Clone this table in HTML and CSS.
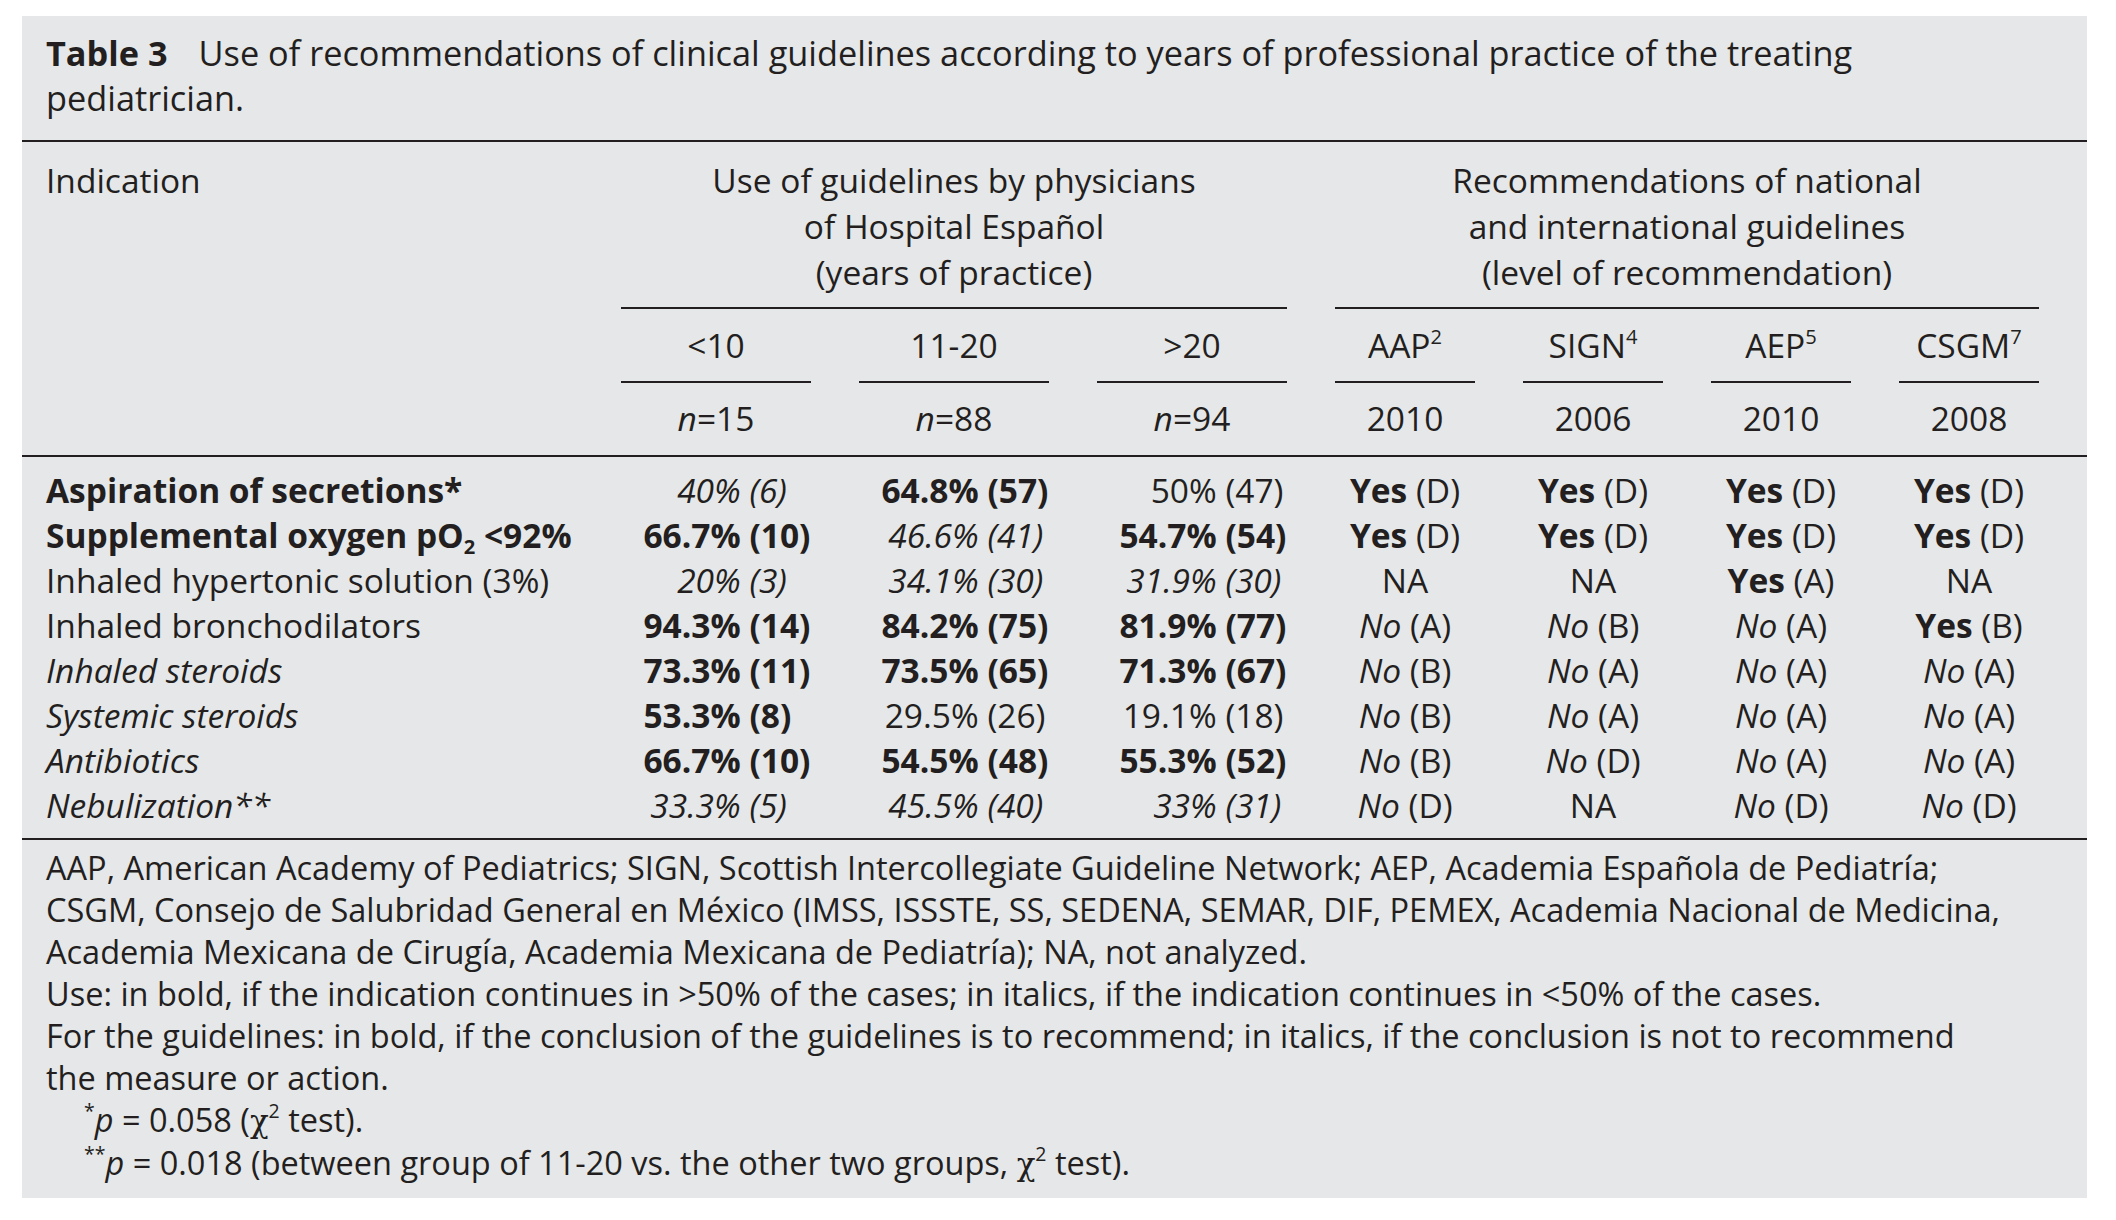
FILE: index.html
```html
<!DOCTYPE html>
<html lang="en">
<head>
<meta charset="utf-8">
<title>Table 3</title>
<link rel="stylesheet" href="styles.css">
</head>
<body>
<div class="table-box">
  <div class="caption">
    <div class="cap-line"><span class="cap-label">Table 3</span>Use of recommendations of clinical guidelines according to years of professional practice of the treating</div>
    <div class="cap-line">pediatrician.</div>
  </div>

  <div class="grid thead">
    <div class="ind-head">Indication</div>
    <div class="grp grp-use">Use of guidelines by physicians<br>of Hospital Español<br>(years of practice)</div>
    <div class="grp grp-rec">Recommendations of national<br>and international guidelines<br>(level of recommendation)</div>

    <div class="blank"></div>
    <div class="sub">&lt;10</div>
    <div class="sub">11-20</div>
    <div class="sub">&gt;20</div>
    <div class="sub">AAP<sup>2</sup></div>
    <div class="sub">SIGN<sup>4</sup></div>
    <div class="sub">AEP<sup>5</sup></div>
    <div class="sub">CSGM<sup>7</sup></div>

    <div class="blank"></div>
    <div class="nrow"><i>n</i>=15</div>
    <div class="nrow"><i>n</i>=88</div>
    <div class="nrow"><i>n</i>=94</div>
    <div class="nrow">2010</div>
    <div class="nrow">2006</div>
    <div class="nrow">2010</div>
    <div class="nrow">2008</div>
  </div>

  <div class="grid tbody">
    <div class="ind b">Aspiration of secretions*</div>
    <div class="v it"><span class="p">40%</span><span class="c">(6)</span></div>
    <div class="v b"><span class="p">64.8%</span><span class="c">(57)</span></div>
    <div class="v"><span class="p">50%</span><span class="c">(47)</span></div>
    <div class="g"><b>Yes</b> (D)</div>
    <div class="g"><b>Yes</b> (D)</div>
    <div class="g"><b>Yes</b> (D)</div>
    <div class="g"><b>Yes</b> (D)</div>

    <div class="ind b">Supplemental oxygen pO<sub>2</sub> &lt;92%</div>
    <div class="v b"><span class="p">66.7%</span><span class="c">(10)</span></div>
    <div class="v it"><span class="p">46.6%</span><span class="c">(41)</span></div>
    <div class="v b"><span class="p">54.7%</span><span class="c">(54)</span></div>
    <div class="g"><b>Yes</b> (D)</div>
    <div class="g"><b>Yes</b> (D)</div>
    <div class="g"><b>Yes</b> (D)</div>
    <div class="g"><b>Yes</b> (D)</div>

    <div class="ind">Inhaled hypertonic solution (3%)</div>
    <div class="v it"><span class="p">20%</span><span class="c">(3)</span></div>
    <div class="v it"><span class="p">34.1%</span><span class="c">(30)</span></div>
    <div class="v it"><span class="p">31.9%</span><span class="c">(30)</span></div>
    <div class="g">NA</div>
    <div class="g">NA</div>
    <div class="g"><b>Yes</b> (A)</div>
    <div class="g">NA</div>

    <div class="ind">Inhaled bronchodilators</div>
    <div class="v b"><span class="p">94.3%</span><span class="c">(14)</span></div>
    <div class="v b"><span class="p">84.2%</span><span class="c">(75)</span></div>
    <div class="v b"><span class="p">81.9%</span><span class="c">(77)</span></div>
    <div class="g"><i>No</i> (A)</div>
    <div class="g"><i>No</i> (B)</div>
    <div class="g"><i>No</i> (A)</div>
    <div class="g"><b>Yes</b> (B)</div>

    <div class="ind it">Inhaled steroids</div>
    <div class="v b"><span class="p">73.3%</span><span class="c">(11)</span></div>
    <div class="v b"><span class="p">73.5%</span><span class="c">(65)</span></div>
    <div class="v b"><span class="p">71.3%</span><span class="c">(67)</span></div>
    <div class="g"><i>No</i> (B)</div>
    <div class="g"><i>No</i> (A)</div>
    <div class="g"><i>No</i> (A)</div>
    <div class="g"><i>No</i> (A)</div>

    <div class="ind it">Systemic steroids</div>
    <div class="v b"><span class="p">53.3%</span><span class="c">(8)</span></div>
    <div class="v"><span class="p">29.5%</span><span class="c">(26)</span></div>
    <div class="v"><span class="p">19.1%</span><span class="c">(18)</span></div>
    <div class="g"><i>No</i> (B)</div>
    <div class="g"><i>No</i> (A)</div>
    <div class="g"><i>No</i> (A)</div>
    <div class="g"><i>No</i> (A)</div>

    <div class="ind it">Antibiotics</div>
    <div class="v b"><span class="p">66.7%</span><span class="c">(10)</span></div>
    <div class="v b"><span class="p">54.5%</span><span class="c">(48)</span></div>
    <div class="v b"><span class="p">55.3%</span><span class="c">(52)</span></div>
    <div class="g"><i>No</i> (B)</div>
    <div class="g"><i>No</i> (D)</div>
    <div class="g"><i>No</i> (A)</div>
    <div class="g"><i>No</i> (A)</div>

    <div class="ind it">Nebulization**</div>
    <div class="v it"><span class="p">33.3%</span><span class="c">(5)</span></div>
    <div class="v it"><span class="p">45.5%</span><span class="c">(40)</span></div>
    <div class="v it"><span class="p">33%</span><span class="c">(31)</span></div>
    <div class="g"><i>No</i> (D)</div>
    <div class="g">NA</div>
    <div class="g"><i>No</i> (D)</div>
    <div class="g"><i>No</i> (D)</div>
  </div>

  <div class="notes">
    <div class="note">AAP, American Academy of Pediatrics; SIGN, Scottish Intercollegiate Guideline Network; AEP, Academia Española de Pediatría;</div>
    <div class="note">CSGM, Consejo de Salubridad General en México (IMSS, ISSSTE, SS, SEDENA, SEMAR, DIF, PEMEX, Academia Nacional de Medicina,</div>
    <div class="note">Academia Mexicana de Cirugía, Academia Mexicana de Pediatría); NA, not analyzed.</div>
    <div class="note">Use: in bold, if the indication continues in &gt;50% of the cases; in italics, if the indication continues in &lt;50% of the cases.</div>
    <div class="note">For the guidelines: in bold, if the conclusion of the guidelines is to recommend; in italics, if the conclusion is not to recommend</div>
    <div class="note">the measure or action.</div>
    <div class="note indent"><sup>*</sup><i>p</i> = 0.058 (<span class="chi">χ</span><sup>2</sup> test).</div>
    <div class="note indent"><sup>**</sup><i>p</i> = 0.018 (between group of 11-20 vs. the other two groups, <span class="chi">χ</span><sup>2</sup> test).</div>
  </div>
</div>
</body>
</html>
```

FILE: styles.css
```css
html, body {
  margin: 0;
  padding: 0;
  background: #ffffff;
}

body {
  font-family: "Open Sans", "Liberation Sans", Arial, sans-serif;
  color: #231f20;
  padding: 16px 0 24px 22px;
}

.table-box {
  width: 2065px;
  background: #e6e7e9;
}

/* caption */
.caption {
  padding: 14px 48px 20px 24px;
  font-size: 34.3px;
  line-height: 45px;
  border-bottom: 2px solid #231f20;
}

.cap-line {
  white-space: nowrap;
}

.cap-label {
  font-weight: bold;
  margin-right: 31px;
}

/* table grid */
.grid {
  display: grid;
  grid-template-columns: 1fr 190px 190px 190px 140px 140px 140px 140px;
  column-gap: 48px;
  padding: 0 48px 0 24px;
  font-size: 33.5px;
  line-height: 45px;
}

.thead {
  padding-top: 15px;
  border-bottom: 2px solid #231f20;
}

.ind-head {
  grid-column: 1;
  line-height: 46px;
}

.grp {
  text-align: center;
  line-height: 46px;
  padding-bottom: 12px;
  border-bottom: 2px solid #231f20;
  white-space: nowrap;
}

.grp-use {
  grid-column: 2 / 5;
}

.grp-rec {
  grid-column: 5 / 9;
}

.sub {
  text-align: center;
  padding: 14px 0 13px;
  border-bottom: 2px solid #231f20;
}

.nrow {
  text-align: center;
  padding: 13px 0 14px;
}

sup, sub {
  font-size: 0.6em;
  line-height: 0;
}

sup {
  vertical-align: 0.7em;
}

sub {
  vertical-align: -0.3em;
}

.tbody {
  padding-top: 11px;
  padding-bottom: 10px;
  border-bottom: 2px solid #231f20;
}

.ind {
  white-space: nowrap;
}

.b {
  font-weight: bold;
}

.it {
  font-style: italic;
}

.v {
  display: flex;
  justify-content: flex-end;
  padding-right: 3px;
  white-space: nowrap;
}

.v .c {
  width: 1.75em;
  margin-left: 0.26em;
  text-align: left;
}

.g {
  text-align: center;
  white-space: nowrap;
}

/* notes */
.notes {
  padding: 7px 40px 13px 24px;
  font-size: 32.5px;
  line-height: 42px;
}

.note {
  white-space: nowrap;
}

.indent {
  padding-left: 38px;
}

.chi {
  font-family: "DejaVu Serif", "Liberation Serif", serif;
  font-size: 0.95em;
}
```
